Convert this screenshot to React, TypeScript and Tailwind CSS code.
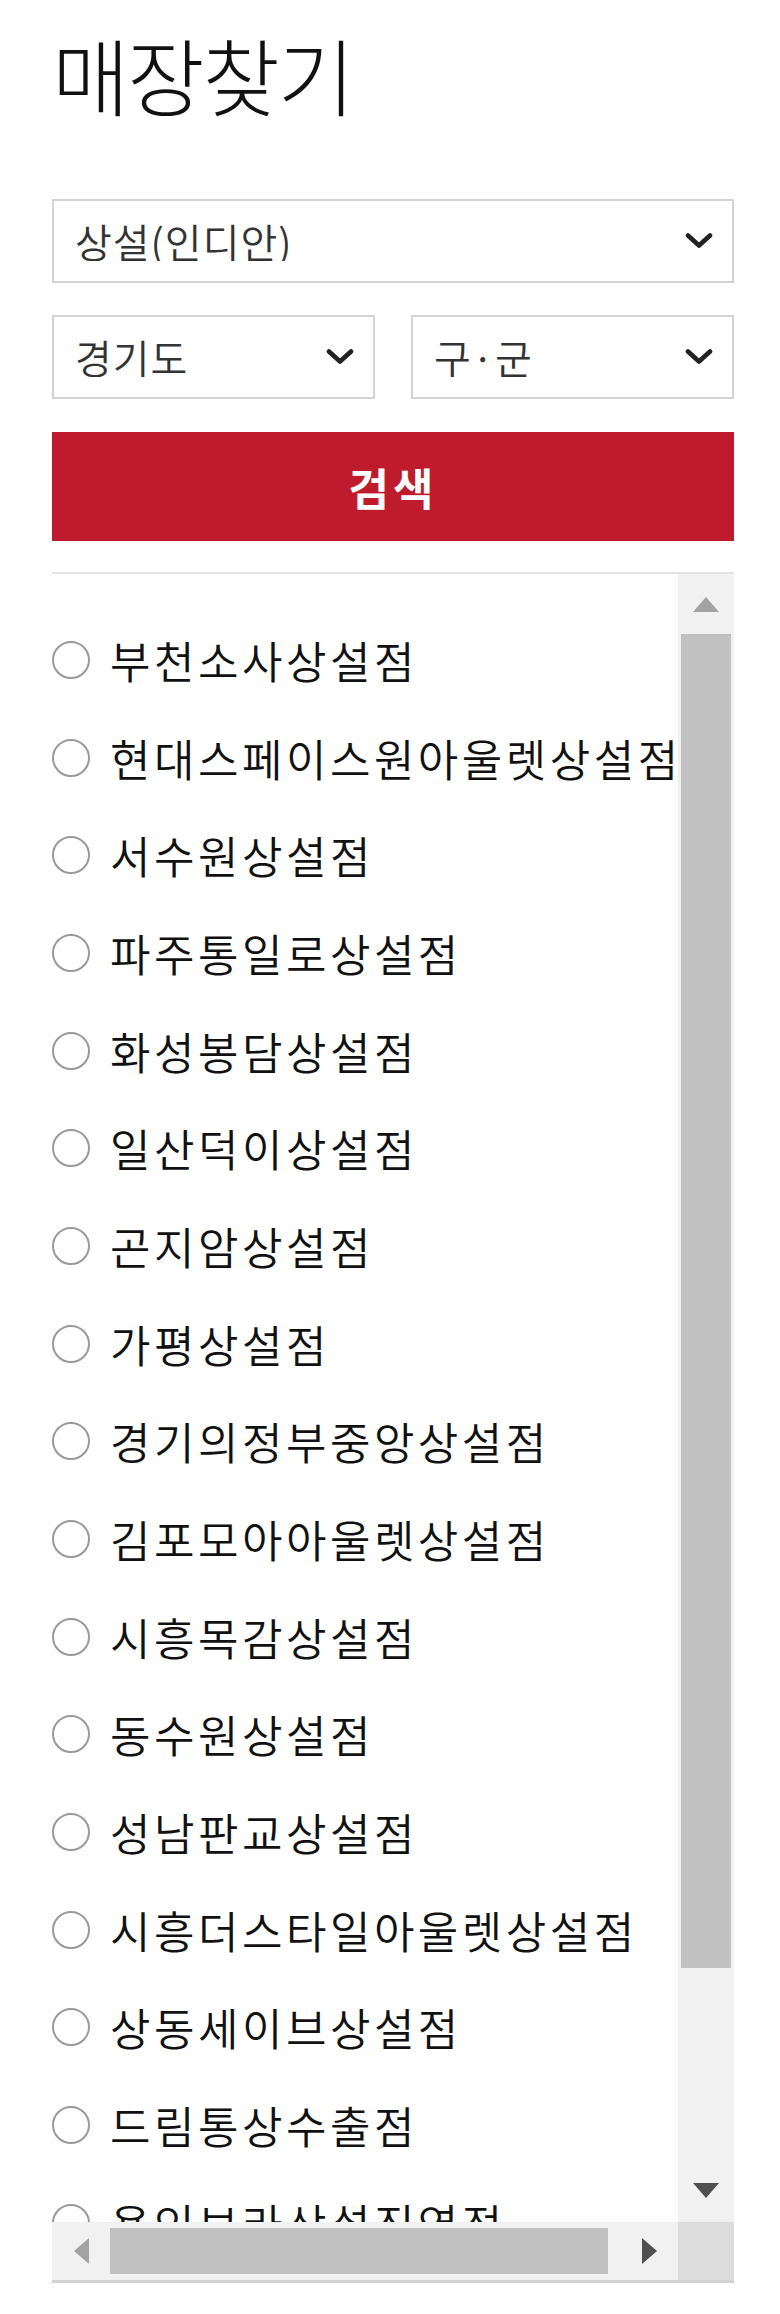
import React from "react";

const stores = [
  "부천소사상설점",
  "현대스페이스원아울렛상설점",
  "서수원상설점",
  "파주통일로상설점",
  "화성봉담상설점",
  "일산덕이상설점",
  "곤지암상설점",
  "가평상설점",
  "경기의정부중앙상설점",
  "김포모아아울렛상설점",
  "시흥목감상설점",
  "동수원상설점",
  "성남판교상설점",
  "시흥더스타일아울렛상설점",
  "상동세이브상설점",
  "드림통상수출점",
  "용인보라상설직영점",
];

function Chevron() {
  return (
    <svg
      className="pointer-events-none absolute right-[21px] top-1/2 -translate-y-1/2"
      width="28"
      height="17"
      viewBox="0 0 28 17"
      fill="none"
    >
      <polyline points="3,3 14,13 25,3" stroke="#222" strokeWidth="4.6" strokeLinecap="round" strokeLinejoin="round" />
    </svg>
  );
}

function SelectBox({ value, options }: { value: string; options: string[] }) {
  return (
    <div className="relative h-[84px]">
      <select
        defaultValue={value}
        className="h-full w-full appearance-none border-2 border-[#d3d3d3] bg-white pl-[21px] pr-[60px] text-[40px] font-[350] leading-none tracking-[1px] text-[#333] outline-none"
      >
        {options.map((o) => (
          <option key={o}>{o}</option>
        ))}
      </select>
      <Chevron />
    </div>
  );
}

function Triangle({ dir, dark }: { dir: "up" | "down" | "left" | "right"; dark?: boolean }) {
  const fill = dark ? "#505050" : "#a3a3a3";
  if (dir === "up" || dir === "down") {
    return (
      <svg width="26" height="15" viewBox="0 0 26 15">
        <polygon points={dir === "up" ? "13,0 26,15 0,15" : "0,0 26,0 13,15"} fill={fill} />
      </svg>
    );
  }
  return (
    <svg width="15" height="26" viewBox="0 0 15 26">
      <polygon points={dir === "left" ? "15,0 15,26 0,13" : "0,0 15,13 0,26"} fill={fill} />
    </svg>
  );
}

export default function App() {
  return (
    <div className="min-h-[2314px] bg-white pt-[32px] font-['Noto_Sans_CJK_KR','Noto_Sans',sans-serif]">
      <div className="ml-[52px] w-[682px]">
        <h1 className="h-[84px] text-[84px] leading-[84px] font-light tracking-[-2px] text-[#111]">매장찾기</h1>

        <div className="mt-[83px]">
          <SelectBox value="상설(인디안)" options={["상설(인디안)", "직영(인디안)", "백화점"]} />
        </div>

        <div className="mt-[32px] grid grid-cols-2 gap-[36px]">
          <SelectBox value="경기도" options={["서울특별시", "경기도", "인천광역시"]} />
          <SelectBox value="구·군" options={["구·군"]} />
        </div>

        <button
          type="button"
          className="mt-[33px] flex h-[109px] w-full items-center justify-center bg-[#be1c2d] text-[44px] font-bold tracking-[4px] text-white"
        >
          검색
        </button>

        {/* store list with scrollbars */}
        <div className="mt-[31px] border-t-2 border-b-[3px] border-t-[#e3e3e3] border-b-[#d2d2d2]">
          <div className="flex h-[1648px]">
            <ul className="flex-1 overflow-hidden pt-[37px]">
              {stores.map((name) => (
                <li key={name} className="flex h-[97.7px] items-center whitespace-nowrap">
                  <input
                    type="radio"
                    name="store"
                    className="h-[38px] w-[38px] shrink-0 appearance-none rounded-full border-[2.5px] border-[#999] bg-white"
                  />
                  <span className="ml-[20px] text-[44px] font-[350] leading-none tracking-[3.5px] text-[#111]">{name}</span>
                </li>
              ))}
            </ul>
            <div className="flex w-[56px] flex-col bg-[#f1f1f1]">
              <div className="flex h-[60px] items-center justify-center">
                <Triangle dir="up" />
              </div>
              <div className="mx-[3px] h-[1334px] bg-[#c1c1c1]" />
              <div className="flex-1" />
              <div className="flex h-[64px] items-center justify-center">
                <Triangle dir="down" dark />
              </div>
            </div>
          </div>
          <div className="flex h-[58px]">
            <div className="flex flex-1 items-center bg-[#f1f1f1]">
              <div className="flex h-full w-[58px] items-center justify-center">
                <Triangle dir="left" />
              </div>
              <div className="h-[46px] w-[498px] bg-[#c1c1c1]" />
              <div className="flex-1" />
              <div className="flex h-full w-[58px] items-center justify-center">
                <Triangle dir="right" dark />
              </div>
            </div>
            <div className="w-[56px] bg-[#dcdcdc]" />
          </div>
        </div>
      </div>
    </div>
  );
}
